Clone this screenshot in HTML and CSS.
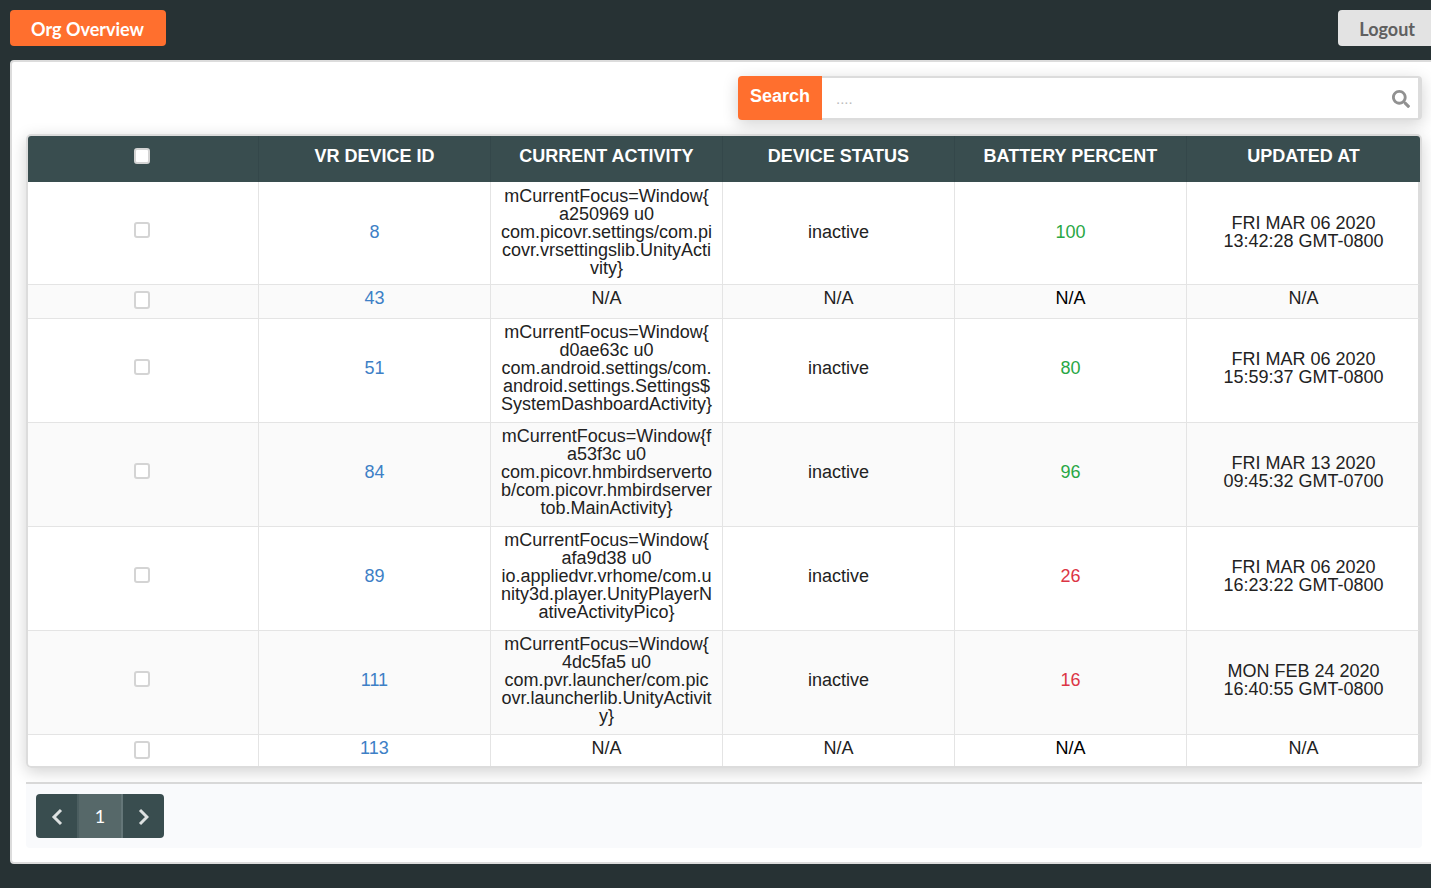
FILE: index.html
```html
<!DOCTYPE html>
<html lang="en">
<head>
<meta charset="utf-8">
<title>VR Devices</title>
<link rel="stylesheet" href="styles.css">
</head>
<body>
<div class="page">
  <header class="topbar">
    <button class="btn btn-primary" type="button">Org Overview</button>
    <button class="btn btn-muted" type="button">Logout</button>
  </header>
  <main class="panel">
    <form class="search">
      <label class="search-label" for="search">Search</label>
      <input class="search-input" id="search" type="text" placeholder="....">
      <svg class="search-icon" viewBox="0 0 512 512" aria-hidden="true"><path d="M505 442.700L405.300 343c-4.500-4.500-10.600-7-17-7H372c27.600-35.300 44-79.700 44-128C416 93.100 322.900 0 208 0S0 93.100 0 208s93.100 208 208 208c48.300 0 92.700-16.400 128-44v16.300c0 6.400 2.500 12.500 7 17l99.700 99.700c9.400 9.400 24.600 9.400 33.900 0l28.300-28.300c9.400-9.400 9.400-24.600.1-34zM208 336c-70.700 0-128-57.200-128-128 0-70.700 57.200-128 128-128 70.700 0 128 57.200 128 128 0 70.700-57.200 128-128 128z"/></svg>
    </form>
    <div class="table-box">
      <table class="devices">
        <colgroup><col class="col-first"><col class="col-mid"><col class="col-mid"><col class="col-mid"><col class="col-mid"><col></colgroup>
        <thead>
          <tr>
            <th><input class="check" type="checkbox" aria-label="Select all devices"></th>
            <th>VR DEVICE ID</th><th>CURRENT ACTIVITY</th><th>DEVICE STATUS</th><th>BATTERY PERCENT</th><th>UPDATED AT</th>
          </tr>
        </thead>
        <tbody>
          <tr>
            <td><input class="check" type="checkbox" aria-label="Select device 8"></td>
            <td><a href="#8">8</a></td>
            <td>mCurrentFocus=Window{a250969 u0 com.picovr.settings/com.picovr.vrsettingslib.UnityActivity}</td>
            <td>inactive</td><td class="good">100</td><td>FRI MAR 06 2020 13:42:28 GMT-0800</td>
          </tr>
          <tr class="short">
            <td><input class="check" type="checkbox" aria-label="Select device 43"></td>
            <td><a href="#43">43</a></td>
            <td>N/A</td><td>N/A</td><td class="none">N/A</td><td>N/A</td>
          </tr>
          <tr>
            <td><input class="check" type="checkbox" aria-label="Select device 51"></td>
            <td><a href="#51">51</a></td>
            <td>mCurrentFocus=Window{d0ae63c u0 com.android.settings/com.android.settings.Settings$SystemDashboardActivity}</td>
            <td>inactive</td><td class="good">80</td><td>FRI MAR 06 2020 15:59:37 GMT-0800</td>
          </tr>
          <tr>
            <td><input class="check" type="checkbox" aria-label="Select device 84"></td>
            <td><a href="#84">84</a></td>
            <td>mCurrentFocus=Window{fa53f3c u0 com.picovr.hmbirdservertob/com.picovr.hmbirdservertob.MainActivity}</td>
            <td>inactive</td><td class="good">96</td><td>FRI MAR 13 2020 09:45:32 GMT-0700</td>
          </tr>
          <tr>
            <td><input class="check" type="checkbox" aria-label="Select device 89"></td>
            <td><a href="#89">89</a></td>
            <td>mCurrentFocus=Window{afa9d38 u0 io.appliedvr.vrhome/com.unity3d.player.UnityPlayerNativeActivityPico}</td>
            <td>inactive</td><td class="low">26</td><td>FRI MAR 06 2020 16:23:22 GMT-0800</td>
          </tr>
          <tr>
            <td><input class="check" type="checkbox" aria-label="Select device 111"></td>
            <td><a href="#111">111</a></td>
            <td>mCurrentFocus=Window{4dc5fa5 u0 com.pvr.launcher/com.picovr.launcherlib.UnityActivity}</td>
            <td>inactive</td><td class="low">16</td><td>MON FEB 24 2020 16:40:55 GMT-0800</td>
          </tr>
          <tr class="short">
            <td><input class="check" type="checkbox" aria-label="Select device 113"></td>
            <td><a href="#113">113</a></td>
            <td>N/A</td><td>N/A</td><td class="none">N/A</td><td>N/A</td>
          </tr>
        </tbody>
      </table>
    </div>
    <footer class="footer">
      <nav class="pager" aria-label="Pages">
        <button class="pager-item" type="button" aria-label="Previous page"><svg class="chevron" viewBox="0 0 12 18" aria-hidden="true"><path d="M10 2L3 9l7 7"/></svg></button>
        <button class="pager-item pager-current" type="button">1</button>
        <button class="pager-item" type="button" aria-label="Next page"><svg class="chevron" viewBox="0 0 12 18" aria-hidden="true"><path d="M3 2l7 7-7 7"/></svg></button>
      </nav>
    </footer>
  </main>
</div>
</body>
</html>
```
FILE: styles.css
```css
* { box-sizing: border-box; }

body {
  margin: 0;
  background: #273234;
  color: #222;
  font-family: "Liberation Sans", Arial, sans-serif;
  font-size: 18px;
  line-height: 18px;
  overflow-x: hidden;
}

.page {
  padding: 10px;
  margin-right: -17px;
}

.topbar {
  display: flex;
  justify-content: space-between;
  margin-bottom: 14px;
}

.btn {
  height: 36px;
  padding: 2px 22px 0 21px;
  border: 0;
  border-radius: 4px;
  font: 700 18px/34px Lato, sans-serif;
}

.btn-primary { background: #ff6f2e; color: #fff; }
.btn-muted { padding-right: 23px; background: #e3e3e3; color: #606060; }

.panel {
  padding: 14px;
  border: 2px solid #dcdcdc;
  border-radius: 4px;
  background: #fff;
}

.search {
  position: relative;
  display: flex;
  width: 49%;
  height: 44px;
  margin: 0 0 14px auto;
  border-radius: 4px;
  box-shadow: 0 4px 16px rgba(0, 0, 0, 0.18);
}

.search-label {
  padding: 11px 12px;
  border-radius: 4px 0 0 4px;
  background: #ff6f2e;
  color: #fff;
  font-weight: 700;
}

.search-input {
  flex: 1;
  min-width: 0;
  padding: 2px 44px 0 14px;
  border: 2px solid #dcdcdc;
  border-width: 2px 4px 2px 0;
  border-radius: 0 4px 4px 0;
  background: #fff;
  font: 15px/18px "Liberation Sans", Arial, sans-serif;
}

.search-input::placeholder { color: #bbb; }

.search-icon {
  position: absolute;
  top: 14px;
  right: 12px;
  width: 18px;
  height: 18px;
  fill: #919191;
}

.table-box {
  border: 2px solid #dcdcdc;
  border-radius: 5px;
  box-shadow: 0 4px 16px rgba(0, 0, 0, 0.18);
  overflow: hidden;
}

.devices {
  width: 100%;
  table-layout: fixed;
  border-collapse: separate;
  border-spacing: 0;
  text-align: center;
}

.col-first { width: 16.52%; }
.col-mid { width: 16.667%; }

.devices th {
  height: 46px;
  padding: 0 9px 6px;
  border-left: 1px solid #34474a;
  background: #394d4f;
  color: #fff;
}

.devices td {
  padding: 4px 9px 9px;
  border-top: 1px solid #e4e4e4;
  border-left: 1px solid #e4e4e4;
  overflow-wrap: anywhere;
}

.devices tbody tr:nth-child(even) { background: #fafafa; }
.devices tbody tr:first-child td { padding: 5px 9px 7px; border-top: 0; }

.devices .short td {
  height: 34px;
  padding-top: 4px;
  padding-bottom: 11px;
}

.devices .short:last-child td { height: 32px; padding-bottom: 9px; }

.devices tr th:first-child,
.devices tbody tr td:first-child {
  padding-right: 11px;
  border-left: 0;
}

.devices tbody tr td:first-child { padding-bottom: 11px; }
.devices .short td:first-child .check { height: 18px; }
.devices tbody .short td:first-child { padding: 5px 11px 9px 9px; }
.devices tbody .short:last-child td:first-child { padding-bottom: 7px; }

.devices tbody tr td:last-child {
  padding-right: 7px;
  border-right: 2px solid #dcdcdc;
}

.devices a { color: #3d80c6; text-decoration: none; }

.devices .good { color: #28a745; }
.devices .low { color: #dc3545; }
.devices .none { color: #000; }

.check {
  display: block;
  width: 16px;
  height: 16px;
  margin: 0 auto;
  appearance: none;
  border: 2px solid #d4d4d4;
  border-radius: 3px;
  background: #fff;
}

.check:checked { background: #394d4f; }

.footer {
  margin-top: 14px;
  padding: 10px;
  border-top: 2px solid #d8d8d8;
  border-radius: 0 0 4px 4px;
  background: #f9fafc;
}

.pager {
  display: flex;
  width: 128px;
  height: 44px;
  border-radius: 4px;
  background: #394d4f;
  overflow: hidden;
}

.pager-item {
  display: flex;
  flex: 1;
  align-items: center;
  justify-content: center;
  padding: 0;
  border: 0;
  background: transparent;
  color: #fff;
  font: 18px/18px Lato, sans-serif;
}

.pager-current {
  border: 2px solid #4b5e60;
  border-width: 0 2px;
  border-right-color: #647678;
  background: #566869;
}

.chevron {
  width: 12px;
  height: 18px;
  margin-top: 2px;
  fill: none;
  stroke: #dde1e1;
  stroke-width: 3;
}
```
